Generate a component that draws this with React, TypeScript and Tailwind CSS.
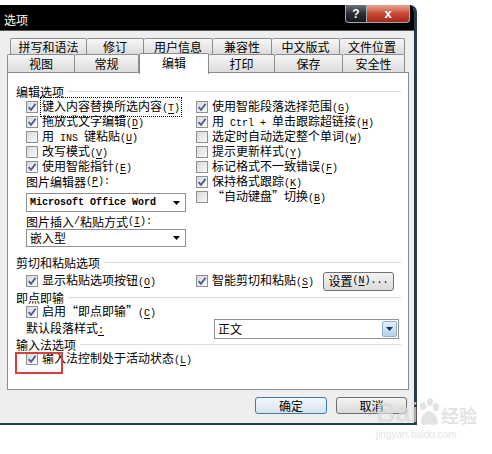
import React from 'react'
import clsx from 'clsx'

const cjk = "font-['Noto_Sans_CJK_SC',sans-serif]"
const mono = "font-['Liberation_Mono',monospace] text-[10px]"

// ascii runs get the narrow mono face, like the half-width bitmap glyphs
function Txt({ s }: { s: string }) {
  return (
    <>
      {s.split(/([\x20-\x7e]+)/).map((p, i) =>
        i % 2 ? (
          <span key={i} className={mono}>
            {p}
          </span>
        ) : (
          p
        )
      )}
    </>
  )
}

function Key({ k }: { k: string }) {
  return (
    <span className={mono}>
      (<span className="underline underline-offset-2">{k}</span>)
    </span>
  )
}

function Box({ on }: { on?: boolean }) {
  return (
    <span className="flex h-[12px] w-[12px] shrink-0 items-center justify-center border border-[#8e8f8f] bg-linear-to-br from-[#d6d9de] to-[#fafafa]">
      {on && (
        <svg width="10" height="10" viewBox="0 0 10 10">
          <path d="M1.6 5.2 L4 7.8 L8.6 1.8" fill="none" stroke="#4a5b8e" strokeWidth="1.8" />
        </svg>
      )}
    </span>
  )
}

function Check({ on, label, k, focus, h = 'h-[15px]' }: { on?: boolean; label: string; k: string; focus?: boolean; h?: string }) {
  return (
    <div className={clsx('flex items-center gap-[4px]', h)}>
      <Box on={on} />
      <span
        className={clsx(
          'whitespace-nowrap leading-[13px]',
          focus && 'outline-1 outline-offset-[1px] outline-dotted outline-black'
        )}
      >
        <Txt s={label} />
        <Key k={k} />
      </span>
    </div>
  )
}

function Group({ title }: { title: string }) {
  return (
    <div className="flex h-full items-center">
      <span className="whitespace-nowrap leading-[13px]">{title}</span>
      <span className="ml-[4px] h-px flex-1 bg-[#d5dce2]" />
    </div>
  )
}

function Arrow() {
  return (
    <svg width="7" height="4" viewBox="0 0 7 4">
      <path d="M0 0 H7 L3.5 4 Z" fill="#000" />
    </svg>
  )
}

const row1 = [
  ['拼写和语法', 'w-[77px]'],
  ['修订', 'w-[57px]'],
  ['用户信息', 'w-[69px]'],
  ['兼容性', 'w-[59px]'],
  ['中文版式', 'w-[68px]'],
  ['文件位置', 'w-[65px]'],
]

const row2 = [
  ['视图', 'w-[68px]'],
  ['常规', 'w-[64px]'],
  ['编辑', 'w-[70px]'],
  ['打印', 'w-[66px]'],
  ['保存', 'w-[68px]'],
  ['安全性', 'w-[62px]'],
]

const leftChecks: [string, string, boolean, boolean?][] = [
  ['键入内容替换所选内容', 'T', true, true],
  ['拖放式文字编辑', 'D', true],
  ['用 INS 键粘贴', 'U', false],
  ['改写模式', 'V', false],
  ['使用智能指针', 'E', true],
]

const rightChecks: [string, string, boolean][] = [
  ['使用智能段落选择范围', 'G', true],
  ['用 Ctrl + 单击跟踪超链接', 'H', true],
  ['选定时自动选定整个单词', 'W', false],
  ['提示更新样式', 'Y', false],
  ['标记格式不一致错误', 'F', false],
  ['保持格式跟踪', 'K', true],
  [' “自动键盘”切换', 'B', false],
]

export default function App() {
  return (
    <div className={`relative h-[454px] w-[492px] overflow-hidden bg-white text-[12px] text-black ${cjk}`}>
      <div className="mt-[5px] flex h-[420px] w-[417px] flex-col overflow-hidden rounded-tr-[7px] border-r-[3px] border-b-[2px] border-[#27394a]">
        {/* title bar */}
        <div className="flex h-[26px] shrink-0 items-start justify-between border-b border-[#55595e] bg-black">
          <span className="pl-[4px] pt-[8px] text-[12px] leading-[14px] text-white">选项</span>
          <div className="mr-[4px] flex">
            <div className="flex h-[18px] w-[22px] items-center justify-center rounded-bl-[4px] border border-t-0 border-[#a3a8ae] bg-linear-to-b from-[#6d737b] via-[#2c3036] to-[#15181c] font-['Liberation_Sans',sans-serif] text-[12px] font-bold text-white">
              ?
            </div>
            <div className="flex h-[18px] w-[43px] items-center justify-center rounded-br-[4px] border border-t-0 border-l-0 border-[#a3a8ae] bg-linear-to-b from-[#e9a597] via-[#c84a35] to-[#a5281a] font-['Liberation_Sans',sans-serif] text-[13px] leading-none font-bold text-white">
              x
            </div>
          </div>
        </div>

        {/* body */}
        <div className="flex flex-1 flex-col bg-[#eeeeee] pr-[5px] pl-[7px] pt-[7px]">
          {/* tabs */}
          <div className="ml-[3px] flex h-[16px]">
            {row1.map(([t, w], i) => (
              <div
                key={t}
                className={clsx(
                  'flex h-[16px] items-center justify-center rounded-t-[2px] border-t border-r border-[#8a8d94] bg-linear-to-b from-[#f6f6f6] to-[#dcdcdc] leading-none',
                  w,
                  i === 0 && 'border-l'
                )}
              >
                {t}
              </div>
            ))}
          </div>
          <div className="flex h-[18px] items-start">
            {row2.map(([t, w], i) =>
              t === '编辑' ? (
                <div
                  key={t}
                  className={clsx(
                    'relative z-10 -mt-px flex h-[21px] items-center justify-center rounded-t-[2px] border-x border-t border-[#8a8d94] bg-white pb-[2px] leading-none',
                    w
                  )}
                >
                  {t}
                </div>
              ) : (
                <div
                  key={t}
                  className={clsx(
                    'flex h-[18px] items-center justify-center rounded-t-[2px] border-t border-r border-[#8a8d94] bg-linear-to-b from-[#f6f6f6] to-[#dcdcdc] leading-none',
                    w,
                    i === 0 && 'border-l'
                  )}
                >
                  {t}
                </div>
              )
            )}
          </div>

          {/* tab page */}
          <div className="relative h-[318px] w-[402px] border border-[#898c95] bg-white pt-[11px] pr-[7px] pl-[8px]">
            <div className="h-[14px]">
              <Group title="编辑选项" />
            </div>

            <div className="mt-px ml-[10px] flex">
              <div className="flex w-[170px] flex-col">
                {leftChecks.map(([l, k, on, f]) => (
                  <Check key={k} label={l} k={k} on={on} focus={f} />
                ))}
                <div className="flex h-[15px] items-center leading-[13px]">
                  图片编辑器<Key k="P" />
                  <span className={mono}>:</span>
                </div>
                <div className="mt-[4px] flex h-[19px] w-[160px] items-center justify-between border border-[#8f8f8f] pr-[5px] pl-[3px]">
                  <span className={clsx(mono, 'font-bold')}>Microsoft Office Word</span>
                  <Arrow />
                </div>
                <div className="mt-[2px] flex h-[15px] items-center leading-[13px]">
                  图片插入<span className={mono}>/</span>粘贴方式<Key k="I" />
                  <span className={mono}>:</span>
                </div>
                <div className="flex h-[18px] w-[160px] items-center justify-between border border-[#8f8f8f] pr-[5px] pl-[3px]">
                  <span className="leading-none">嵌入型</span>
                  <Arrow />
                </div>
              </div>
              <div className="flex flex-col">
                {rightChecks.map(([l, k, on]) => (
                  <Check key={k} label={l} k={k} on={on} />
                ))}
              </div>
            </div>

            <div className="mt-[8px] h-[14px]">
              <Group title="剪切和粘贴选项" />
            </div>
            <div className="mt-[2px] ml-[10px] flex h-[20px] items-center">
              <div className="w-[170px]">
                <Check on label="显示粘贴选项按钮" k="O" />
              </div>
              <div className="flex w-[198px] items-center justify-between">
                <Check on label="智能剪切和粘贴" k="S" />
                <div className="flex h-[19px] w-[71px] items-center justify-center rounded-[3px] border border-[#707070] bg-linear-to-b from-[#f4f4f4] to-[#dadada] leading-none">
                  设置<Key k="N" />
                  <span className={mono}>...</span>
                </div>
              </div>
            </div>

            <div className="h-[13px]">
              <Group title="即点即输" />
            </div>
            <div className="mt-px ml-[10px]">
              <Check on label="启用“即点即输”" k="C" h="h-[14px]" />
            </div>
            <div className="ml-[10px] flex h-[20px] items-center">
              <span className="w-[188px] leading-[13px]">
                默认段落样式<span className={clsx(mono, 'underline underline-offset-2')}>:</span>
              </span>
              <div className="flex h-[20px] w-[185px] items-center justify-between border border-[#8f8f8f] pr-px pl-[3px]">
                <span className="leading-none">正文</span>
                <span className="flex h-[16px] w-[15px] items-center justify-center rounded-[2px] border border-[#8db2d3] bg-linear-to-b from-[#e3f0fa] to-[#b4d3ea]">
                  <svg width="7" height="4" viewBox="0 0 7 4">
                    <path d="M0 0 H7 L3.5 4 Z" fill="#1c3550" />
                  </svg>
                </span>
              </div>
            </div>
            <div className="h-[11px]">
              <Group title="输入法选项" />
            </div>
            <div className="mt-[2px] ml-[10px]">
              <Check on label="输入法控制处于活动状态" k="L" h="h-[14px]" />
            </div>

            {/* red annotation frame */}
            <div className="absolute top-[279px] left-[7px] h-[22px] w-[48px] border-2 border-[#d4403e]" />
          </div>

          {/* dialog buttons */}
          <div className="mt-[7px] flex justify-end gap-[9px] pr-[2px]">
            <div className="flex h-[17px] w-[72px] items-center justify-center rounded-[3px] border border-[#3d7bad] bg-linear-to-b from-[#f3f8fc] to-[#d4e3ef] leading-none">
              确定
            </div>
            <div className="flex h-[17px] w-[71px] items-center justify-center rounded-[3px] border border-[#707070] bg-linear-to-b from-[#f4f4f4] to-[#d9d9d9] leading-none">
              取消
            </div>
          </div>
        </div>
      </div>

      {/* watermark */}
      <div className="absolute top-[398px] left-[376px] flex flex-col opacity-75">
        <div className="flex items-end">
          <span className="font-['Liberation_Sans',sans-serif] text-[27px] leading-[28px] font-bold text-[#dadada]">Bai</span>
          <svg width="22" height="28" viewBox="0 0 22 28" className="mb-px">
            <g fill="#dadada">
              <ellipse cx="5" cy="8" rx="3" ry="4" />
              <ellipse cx="12" cy="4" rx="3" ry="4" />
              <ellipse cx="18" cy="9" rx="3" ry="4" />
              <path d="M3 24 C3 17 8 13 11 13 C15 13 20 18 20 24 C20 28 14 27 11 26 C8 27 3 28 3 24 Z" />
            </g>
          </svg>
          <span className="ml-px text-[18px] leading-[24px] font-bold text-[#dadada]">经验</span>
        </div>
        <span className="mt-[2px] font-['Liberation_Sans',sans-serif] text-[10px] leading-[12px] text-[#dcdcdc]">jingyan.baidu.com</span>
      </div>
    </div>
  )
}
